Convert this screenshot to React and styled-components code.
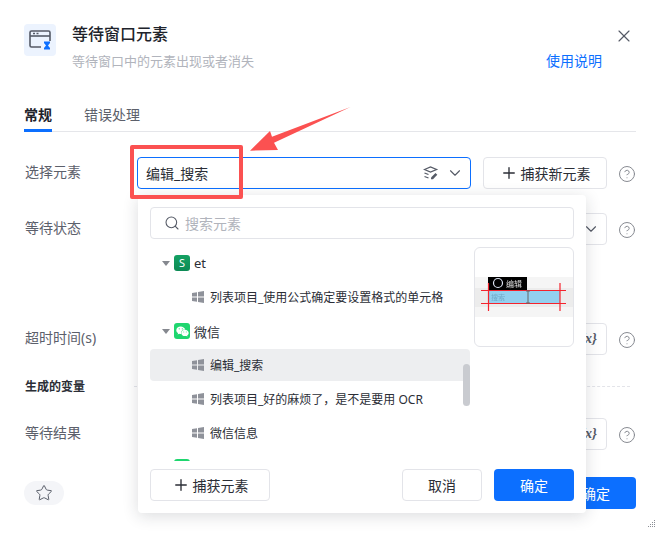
import React from 'react'
import styled, { createGlobalStyle } from 'styled-components'
import { X, ChevronDown, Plus, Search, CircleHelp, Star } from 'lucide-react'
import { FaWeixin } from 'react-icons/fa'

const GlobalStyle = createGlobalStyle`
html, body { margin: 0; padding: 0; background: #fff; }
* { box-sizing: border-box; }
body { font-family: "Noto Sans", "Noto Sans CJK SC", sans-serif; font-size: 14px; color: #2b2e36; }
`

const Page = styled.div`
position: relative;
width: 660px;
height: 533px;
overflow: hidden;
padding: 24px 24px 0;
background: #fff;
`
const Header = styled.div`
display: flex;
height: 80px;
`
const HeaderIcon = styled.div`
width: 32px;
height: 32px;
border-radius: 4px;
background: #ecf3fe;
display: flex;
align-items: center;
justify-content: center;
margin-right: 16px;
`
const HeaderText = styled.div`
flex: 1;
`
const Title = styled.div`
font-size: 16px;
font-weight: 500;
line-height: 20px;
color: #20232b;
`
const SubRow = styled.div`
display: flex;
justify-content: space-between;
margin-top: 7px;
padding-right: 34px;
line-height: 20px;
`
const Subtitle = styled.span`
font-size: 13px;
color: #b1b4bc;
`
const HelpLink = styled.span`
color: #0c6fff;
`
const CloseButton = styled.div`
position: absolute;
top: 26px;
left: 614px;
color: #555a66;
display: flex;
`
const Tabs = styled.div`
display: flex;
gap: 32px;
height: 28px;
border-bottom: 1px solid #e5e6ea;
margin-bottom: 25px;
`
const Tab = styled.div`
line-height: 22px;
height: 28px;
color: ${p => (p.$active ? '#20232b' : '#5c606b')};
font-weight: ${p => (p.$active ? 600 : 400)};
border-bottom: ${p => (p.$active ? '3px solid #0c6fff' : 'none')};
`
const Row = styled.div`
display: flex;
align-items: center;
height: 32px;
margin-bottom: ${p => p.$after || 0}px;
`
const Label = styled.div`
width: 113px;
flex: none;
color: #5c606b;
margin-top: -4px;
padding-left: 1px;
`
const Control = styled.div`
flex: 1;
display: flex;
gap: 12px;
height: 32px;
`
const Field = styled.div`
flex: 1;
height: 32px;
display: flex;
align-items: center;
justify-content: flex-end;
margin-left: ${p => (p.$focus ? 0 : 8)}px;
border: 1px solid ${p => (p.$focus ? '#0c6fff' : '#e3e4e9')};
border-radius: 4px;
padding: 0 ${p => (p.$tight ? 9 : 6)}px 0 8px;
color: #555a66;
`
const FieldValue = styled.span`
flex: 1;
color: #2b2e36;
`
const Fx = styled.span`
font-family: "Liberation Serif", serif;
font-size: 14px;
font-weight: 700;
font-style: italic;
color: #555a66;
`
const CaptureButton = styled.div`
width: 124px;
height: 32px;
flex: none;
display: flex;
align-items: center;
justify-content: center;
gap: 3px;
border: 1px solid #e3e4e9;
border-radius: 4px;
color: #2b2e36;
background: #fff;
`
const Help = styled.div`
width: 18px;
margin: 2px 0 0 11px;
color: #85888f;
display: flex;
`
const Section = styled.div`
display: flex;
align-items: center;
height: 16px;
margin: 23px 0 24px;
font-size: 12px;
font-weight: 600;
color: #2b2e36;
`
const SectionTitle = styled.span`
flex: none;
width: 110px;
padding-left: 1px;
`
const Dashed = styled.div`
flex: 1;
margin-right: 6px;
border-top: 1px dashed #e3e4e9;
`
const Footer = styled.div`
display: flex;
align-items: center;
justify-content: space-between;
height: 32px;
margin-top: 27px;
`
const StarPill = styled.div`
width: 40px;
height: 24px;
border-radius: 12px;
background: #f4f5f8;
display: flex;
align-items: center;
justify-content: center;
color: #555a66;
`
const PrimaryButton = styled.div`
width: ${p => p.$width}px;
height: 32px;
border-radius: 4px;
background: #0c6fff;
color: #fff;
display: flex;
align-items: center;
justify-content: center;
`
const Popover = styled.div`
position: absolute;
left: 138px;
top: 195px;
width: 448px;
height: 318px;
padding: 12px;
background: #fff;
border-radius: 4px;
box-shadow: 0 3px 16px rgba(30, 35, 50, 0.16);
`
const SearchBox = styled.div`
height: 32px;
display: flex;
align-items: center;
gap: 5px;
padding: 0 13px;
border: 1px solid #e3e4e9;
border-radius: 4px;
color: #b1b4bc;
margin-bottom: 8px;
`
const SearchIcon = styled(Search)`
color: #555a66;
flex: none;
`
const Middle = styled.div`
display: flex;
gap: 4px;
height: 214px;
margin-bottom: 8px;
`
const TreeList = styled.div`
position: relative;
width: 320px;
overflow: hidden;
`
const TreeRow = styled.div`
height: 32px;
margin-bottom: 2px;
display: flex;
align-items: center;
font-size: ${p => (p.$child ? 12 : 13)}px;
padding-left: ${p => (p.$child ? 42 : 12)}px;
border-radius: 4px;
color: #2b2e36;
background: ${p => (p.$selected ? '#edeef0' : 'transparent')};
`
const Caret = styled.span`
width: 0;
height: 0;
border-left: 4px solid transparent;
border-right: 4px solid transparent;
border-top: 5px solid #85888f;
margin-right: 4px;
`
const AppIcon = styled.span`
width: 16px;
height: 16px;
border-radius: 3px;
background: ${p => p.$bg};
color: #fff;
font-size: 11px;
line-height: 14px;
display: flex;
align-items: center;
justify-content: center;
margin-right: 4px;
`
const Scrollbar = styled.div`
position: absolute;
top: 117px;
right: 0;
width: 7px;
height: 42px;
border-radius: 4px;
background: #c9cbd0;
`
const Preview = styled.div`
width: 100px;
height: 100px;
border: 1px solid #e3e4e9;
border-radius: 6px;
overflow: hidden;
`
const ShotSvg = styled.svg`
display: block;
filter: blur(0.4px);
`
const PopFooter = styled.div`
display: flex;
align-items: center;
gap: 12px;
`
const AddButton = styled(CaptureButton)`
width: 120px;
margin-right: auto;
`
const CancelButton = styled(CaptureButton)`
width: 80px;
`
const Highlight = styled.div`
position: absolute;
left: 130px;
top: 145px;
width: 113px;
height: 54px;
border: 4px solid #fb5151;
border-radius: 2px;
`
const Arrow = styled.svg`
position: absolute;
left: 240px;
top: 100px;
`
const Grip = styled.svg`
position: absolute;
left: 646px;
top: 519px;
`

const WinIcon = () => (
  <svg width="12" height="12" viewBox="0 0 12 12" style={{ marginRight: 6, flex: 'none' }}>
    <path d="M0 2l5-.8V5.4H0zM6 1l6-1v5.4H6zM0 6.400h5v4.300l-5-.8zM6 6.400h6V12l-6-1z" fill="#8f929a" />
  </svg>
)

const WindowGlyph = () => (
  <svg width="24" height="24" viewBox="0 0 24 24" fill="none">
    <path d="M13 19H3.500A1.500 1.500 0 0 1 2 17.500v-13A1.500 1.500 0 0 1 3.500 3h17A1.500 1.500 0 0 1 22 4.500V13" stroke="#555a66" strokeWidth="1.600" />
    <path d="M2 8h20" stroke="#555a66" strokeWidth="1.600" />
    <path d="M5 5.500h2M8.500 5.500h2" stroke="#555a66" strokeWidth="1.400" />
    <path d="M16 13.500h6v1.500l-2 2.500 2 2.500v1.500h-6V20l2-2.500-2-2.500z" fill="#0c6fff" />
  </svg>
)

const LayersEdit = () => (
  <svg width="16" height="16" viewBox="0 0 16 16" fill="none" stroke="#555a66" strokeWidth="1.300" style={{ marginRight: 7 }}>
    <path d="M1.500 4.500 7.500 2l6 2.500-6 2.500z" />
    <path d="M1.500 8l4 1.500M1.500 11.500l4 1.500" />
    <path d="M8 12.500 12.500 8l1.800 1.800L10 14.200H8z" fill="#555a66" stroke="none" />
  </svg>
)

const PreviewShot = () => (
  <ShotSvg width="98" height="98" viewBox="0 0 98 98">
    <rect x="0" y="29" width="98" height="40" fill="#f5f5f5" />
    <rect x="0" y="40" width="98" height="19" fill="#ececec" />
    <rect x="13" y="29" width="39" height="13" fill="#000" />
    <circle cx="23" cy="35" r="4.500" fill="none" stroke="#dfe6f5" strokeWidth="1.200" />
    <text x="31" y="39" fontSize="8" fill="#ddd">编辑</text>
    <rect x="14" y="43" width="71" height="12" fill="#93d0ef" />
    <text x="16" y="52" fontSize="7" fill="#6fa9c9">搜索</text>
    <path d="M6 42.500h85M6 55.500h85M13.500 35v28M85 35v28" stroke="#f5232d" strokeWidth="1.200" />
    <path d="M53 43v12M51 43h4M51 55h4" stroke="#666" strokeWidth="1" />
  </ShotSvg>
)

const chevronProps = { size: 18, strokeWidth: 1.500 }
const helpProps = { size: 18, strokeWidth: 1.300 }
const plusProps = { size: 18, strokeWidth: 1.800 }

export default function App() {
  return (
    <Page>
      <GlobalStyle />
      <Header>
        <HeaderIcon><WindowGlyph /></HeaderIcon>
        <HeaderText>
          <Title>等待窗口元素</Title>
          <SubRow>
            <Subtitle>等待窗口中的元素出现或者消失</Subtitle>
            <HelpLink>使用说明</HelpLink>
          </SubRow>
        </HeaderText>
      </Header>
      <CloseButton><X size={20} strokeWidth={1.400} /></CloseButton>

      <Tabs>
        <Tab $active>常规</Tab>
        <Tab>错误处理</Tab>
      </Tabs>

      <Row $after={24}>
        <Label>选择元素</Label>
        <Control>
          <Field $focus>
            <FieldValue>编辑_搜索</FieldValue>
            <LayersEdit />
            <ChevronDown {...chevronProps} />
          </Field>
          <CaptureButton><Plus {...plusProps} />捕获新元素</CaptureButton>
        </Control>
        <Help><CircleHelp {...helpProps} /></Help>
      </Row>
      <Row $after={78}>
        <Label>等待状态</Label>
        <Control>
          <Field><ChevronDown {...chevronProps} /></Field>
        </Control>
        <Help><CircleHelp {...helpProps} /></Help>
      </Row>
      <Row>
        <Label>超时时间(s)</Label>
        <Control>
          <Field $tight><Fx>{'{x}'}</Fx></Field>
        </Control>
        <Help><CircleHelp {...helpProps} /></Help>
      </Row>
      <Section>
        <SectionTitle>生成的变量</SectionTitle>
        <Dashed />
      </Section>
      <Row>
        <Label>等待结果</Label>
        <Control>
          <Field $tight><Fx>{'{x}'}</Fx></Field>
        </Control>
        <Help><CircleHelp {...helpProps} /></Help>
      </Row>
      <Footer>
        <StarPill><Star size={18} strokeWidth={1.300} /></StarPill>
        <PrimaryButton $width={80}>确定</PrimaryButton>
      </Footer>

      <Popover>
        <SearchBox>
          <SearchIcon size={16} strokeWidth={1.600} />
          搜索元素
        </SearchBox>
        <Middle>
          <TreeList>
            <TreeRow>
              <Caret />
              <AppIcon $bg="linear-gradient(180deg, #14a163, #0c8a55)">S</AppIcon>
              et
            </TreeRow>
            <TreeRow $child><WinIcon />列表项目_使用公式确定要设置格式的单元格</TreeRow>
            <TreeRow>
              <Caret />
              <AppIcon $bg="#1fd66f"><FaWeixin size={13} /></AppIcon>
              微信
            </TreeRow>
            <TreeRow $child $selected><WinIcon />编辑_搜索</TreeRow>
            <TreeRow $child><WinIcon />列表项目_好的麻烦了，是不是要用 OCR</TreeRow>
            <TreeRow $child><WinIcon />微信信息</TreeRow>
            <TreeRow>
              <Caret />
              <AppIcon $bg="#1fd66f" />
            </TreeRow>
            <Scrollbar />
          </TreeList>
          <Preview><PreviewShot /></Preview>
        </Middle>
        <PopFooter>
          <AddButton><Plus {...plusProps} />捕获元素</AddButton>
          <CancelButton>取消</CancelButton>
          <PrimaryButton $width={80}>确定</PrimaryButton>
        </PopFooter>
      </Popover>

      <Highlight />
      <Arrow width="112" height="56" viewBox="0 0 112 56">
        <path d="M110.500 7 32 36.700 30 31 10 50.700 38 50 34 42.700z" fill="#fb5151" />
      </Arrow>
      <Grip width="12" height="12" viewBox="0 0 12 12" fill="#8a8d94">
        <rect x="8" y="1" width="1" height="1" />
        <rect x="6" y="3" width="1" height="1" />
        <rect x="8" y="3" width="1" height="1" />
        <rect x="4" y="5" width="1" height="1" />
        <rect x="6" y="5" width="1" height="1" />
        <rect x="8" y="5" width="1" height="1" />
        <rect x="2" y="7" width="1" height="1" />
        <rect x="4" y="7" width="1" height="1" />
        <rect x="6" y="7" width="1" height="1" />
        <rect x="8" y="7" width="1" height="1" />
      </Grip>
    </Page>
  )
}
